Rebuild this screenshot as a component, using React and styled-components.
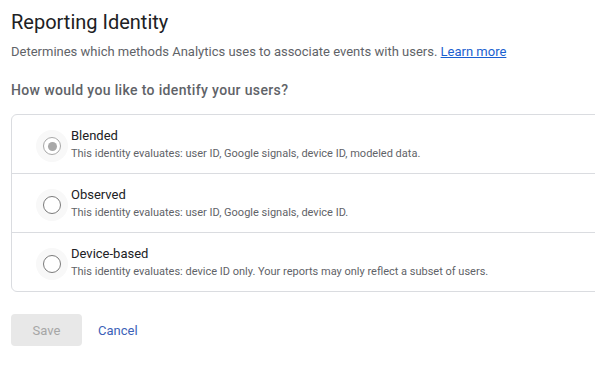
import React from "react";
import styled, { createGlobalStyle } from "styled-components";

const GlobalStyle = createGlobalStyle`
  html, body {
    margin: 0;
    padding: 0;
    background: #ffffff;
    font-family: Roboto, "Liberation Sans", Arial, sans-serif;
    overflow: hidden;
  }
`;

const options = [
  {
    id: "blended",
    label: "Blended",
    detail: "This identity evaluates: user ID, Google signals, device ID, modeled data.",
    selected: true,
  },
  {
    id: "observed",
    label: "Observed",
    detail: "This identity evaluates: user ID, Google signals, device ID.",
  },
  {
    id: "device",
    label: "Device-based",
    detail:
      "This identity evaluates: device ID only. Your reports may only reflect a subset of users.",
  },
];

function Radio({ selected }) {
  return (
    <RadioHalo>
      <RadioRing $selected={selected}>{selected && <RadioDot />}</RadioRing>
    </RadioHalo>
  );
}

export default function App() {
  return (
    <Page>
      <GlobalStyle />
      <Title>Reporting Identity</Title>
      <Description>
        Determines which methods Analytics uses to associate events with users.{" "}
        <Link href="#">Learn more</Link>
      </Description>
      <Question>How would you like to identify your users?</Question>

      <Panel>
        {options.map((o) => (
          <Row key={o.id}>
            <Radio selected={o.selected} />
            <RowText>
              <Label>{o.label}</Label>
              <Detail>{o.detail}</Detail>
            </RowText>
          </Row>
        ))}
      </Panel>

      <Actions>
        <SaveButton disabled>Save</SaveButton>
        <CancelButton>Cancel</CancelButton>
      </Actions>
    </Page>
  );
}

const Page = styled.div`
  width: 595px;
  height: 368px;
  padding: 9px 0 0 11px;
  box-sizing: border-box;
  overflow: hidden;
`;

const Title = styled.h1`
  margin: 0;
  font-size: 20px;
  font-weight: 400;
  line-height: 26px;
  color: #202124;
`;

const Description = styled.p`
  margin: 8px 0 0;
  font-size: 13px;
  line-height: 18px;
  color: #5f6368;
  white-space: nowrap;
`;

const Link = styled.a`
  color: #1a5fd0;
  text-decoration: underline;
`;

const Question = styled.h2`
  margin: 19px 0 0;
  font-size: 14px;
  font-weight: 500;
  letter-spacing: 0.35px;
  line-height: 20px;
  color: #5f6368;
`;

const Panel = styled.div`
  margin-top: 14px;
  width: 620px;
  border: 1px solid #dadce0;
  border-radius: 6px;
  overflow: hidden;
`;

const Row = styled.div`
  display: flex;
  align-items: center;
  height: 58px;
  padding-left: 24px;
  gap: 3px;
  box-sizing: border-box;

  & + & {
    border-top: 1px solid #dadce0;
    height: 59px;
  }
`;

const RadioHalo = styled.div`
  width: 32px;
  height: 32px;
  border-radius: 50%;
  background: #f8f8f8;
  display: flex;
  align-items: center;
  justify-content: center;
  margin-top: 4px;
`;

const RadioRing = styled.div`
  width: 18px;
  height: 18px;
  box-sizing: border-box;
  border-radius: 50%;
  border: 1.5px solid ${(p) => (p.$selected ? "#a8a8a8" : "#7a7a7a")};
  background: #ffffff;
  display: flex;
  align-items: center;
  justify-content: center;
`;

const RadioDot = styled.div`
  width: 9px;
  height: 9px;
  border-radius: 50%;
  background: #a8a8a8;
`;

const RowText = styled.div`
  display: flex;
  flex-direction: column;
  gap: 2px;
`;

const Label = styled.div`
  font-size: 13px;
  line-height: 17px;
  color: #202124;
`;

const Detail = styled.div`
  font-size: 11px;
  line-height: 15px;
  color: #5f6368;
`;

const Actions = styled.div`
  display: flex;
  align-items: center;
  gap: 16px;
  margin-top: 22px;
`;

const SaveButton = styled.button`
  width: 71px;
  height: 32px;
  border: none;
  border-radius: 4px;
  background: #e8e8e8;
  color: #a6a6a6;
  font-family: Roboto, "Liberation Sans", Arial, sans-serif;
  font-size: 13px;
`;

const CancelButton = styled.button`
  border: none;
  background: none;
  padding: 0;
  color: #3c62b8;
  font-family: Roboto, "Liberation Sans", Arial, sans-serif;
  font-size: 13px;
`;
